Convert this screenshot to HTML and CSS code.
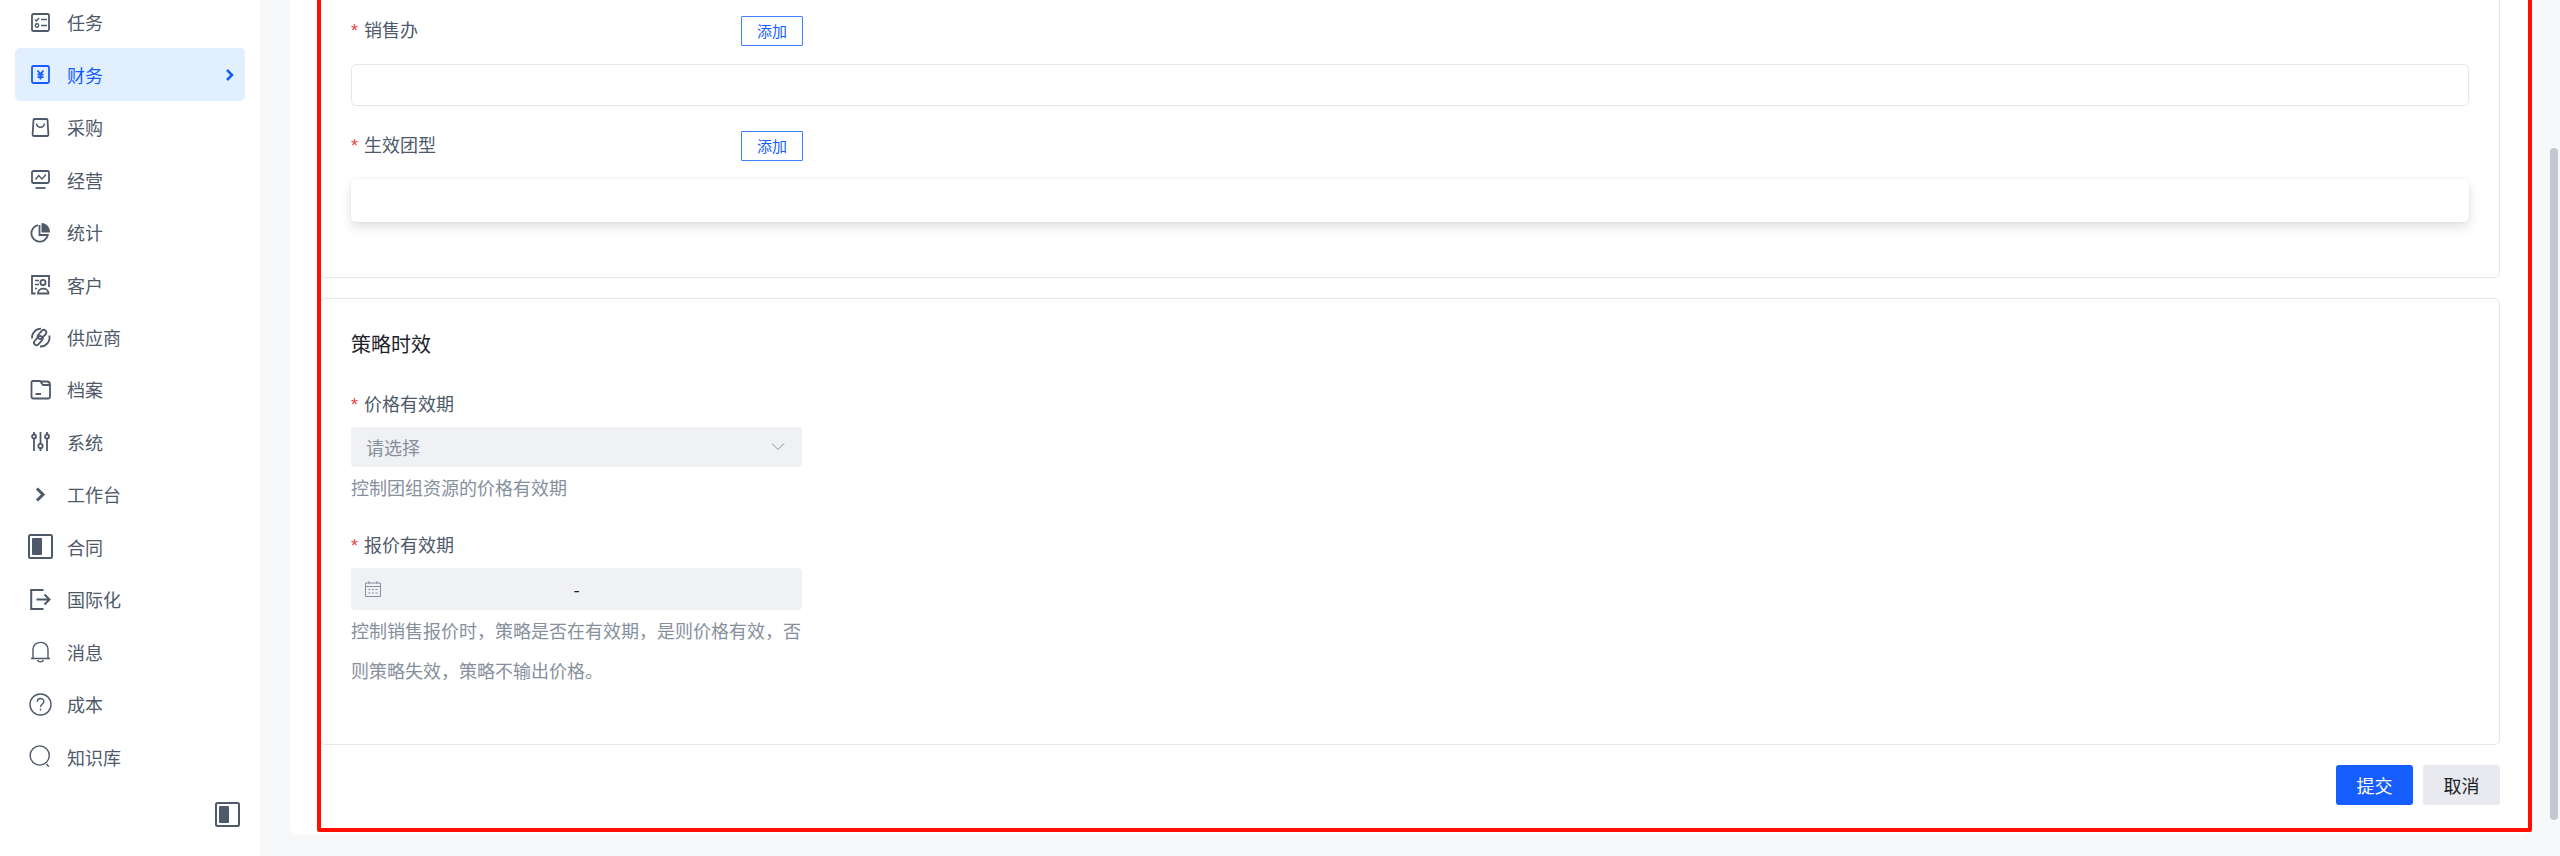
FILE: index.html
```html
<!DOCTYPE html>
<html lang="zh-CN">
<head>
<meta charset="utf-8">
<title>策略时效</title>
<link rel="stylesheet" href="styles.css">
</head>
<body>
<div class="app">
  <aside class="sidebar">
    <nav class="menu" aria-label="主菜单">
      <a class="menu-item" href="#">
        <svg class="icon" viewBox="0 0 25 25"><rect x="4" y="4" width="17" height="17" rx="1.5"/><path class="thin" d="M7 9.500l1.500 1.500 2.500-3M13 9.500h6M13 15.500h6"/><circle class="thin" cx="9" cy="15.500" r="1.700"/></svg>
        <span>任务</span>
      </a>
      <a class="menu-item active" href="#">
        <svg class="icon" viewBox="0 0 25 25"><rect x="4" y="4" width="17" height="17" rx="1.500"/><path d="M9.500 8.500l3 3.500 3-3.500M12.500 12v5.500M9.500 12.700h6M9.500 15.200h6"/></svg>
        <span>财务</span>
        <svg class="arrow" viewBox="0 0 12 12"><path d="M3 1l5 5-5 5"/></svg>
      </a>
      <a class="menu-item" href="#">
        <svg class="icon" viewBox="0 0 25 25"><path d="M6.300 4h12.400q.7 0 .8.800l.9 15q0 1.200-1.200 1.200H5.800q-1.200 0-1.200-1.200l.9-15q.1-.8.800-.8z"/><path class="thin" d="M8.500 8.500c1 5 7 5 8 0"/></svg>
        <span>采购</span>
      </a>
      <a class="menu-item" href="#">
        <svg class="icon" viewBox="0 0 25 25"><rect x="4" y="4" width="17" height="12" rx="1.500"/><path class="thin" d="M7.500 12.500l3.200-4 3.300 3.500 4-4.500"/><path d="M7.500 21h10"/></svg>
        <span>经营</span>
      </a>
      <a class="menu-item" href="#">
        <svg class="icon" viewBox="0 0 25 25"><path d="M10 5.200A8.300 8.300 0 1 0 19.800 15H11.500V5"/><path class="solid" d="M13.500 3v9.500H22C22 7 18.500 3.300 13.500 3z"/></svg>
        <span>统计</span>
      </a>
      <a class="menu-item" href="#">
        <svg class="icon" viewBox="0 0 25 25"><path d="M7.500 21.500H4V4h17v11"/><path class="thin" d="M7 8.500h4M7 12.500h4M7 16.500h2"/><circle cx="15" cy="10.500" r="2.600"/><path d="M10 21.500c0-6.500 10.500-6.500 10.500 0z"/></svg>
        <span>客户</span>
      </a>
      <a class="menu-item" href="#">
        <svg class="icon" viewBox="0 0 25 25"><path d="M4 13.500A9 9 0 0 1 13 3.700M21.300 10.500A9 9 0 0 1 12 21.500"/><g transform="rotate(-48 12.500 12.500)"><rect x="3.500" y="10.500" width="10.500" height="5" rx="2.500"/><rect x="10.500" y="9" width="10.500" height="5" rx="2.500"/></g></svg>
        <span>供应商</span>
      </a>
      <a class="menu-item" href="#">
        <svg class="icon" viewBox="0 0 25 25"><path d="M5 4h7l3 4h7v11.500q0 2-2 2H5.500q-2 0-2-2V5.500Q3.500 4 5 4zM12 4.500h7q3 0 3 3.500M7.500 17h5.500"/></svg>
        <span>档案</span>
      </a>
      <a class="menu-item" href="#">
        <svg class="icon" viewBox="0 0 25 25"><path d="M6 3v2.500M6 9.500V22M12.500 3v12M12.500 19.500V22M19 3v2.500M19 9.500V22"/><circle cx="6" cy="7.500" r="2"/><circle cx="12.500" cy="17" r="2.200"/><circle cx="19" cy="7.500" r="2"/></svg>
        <span>系统</span>
      </a>
      <a class="menu-item" href="#">
        <svg class="icon bold" viewBox="0 0 25 25"><path d="M9 6.500l6 6-6 6"/></svg>
        <span>工作台</span>
      </a>
      <a class="menu-item" href="#">
        <svg class="icon" viewBox="0 0 25 25"><rect class="wide" x="1" y="1" width="23" height="23" rx="1.500"/><rect class="solid" x="4" y="4" width="10" height="17" rx="1"/></svg>
        <span>合同</span>
      </a>
      <a class="menu-item" href="#">
        <svg class="icon" viewBox="0 0 25 25"><path class="wide" d="M15.500 3H3.200v19h12.300M8.500 12.500H21.500M16.500 7.500l5 5-5 5"/></svg>
        <span>国际化</span>
      </a>
      <a class="menu-item" href="#">
        <svg class="icon" viewBox="0 0 25 25"><path class="thin" d="M3 19.500h19M5 19.500V10.500c0-9.500 15-9.500 15 0V19.500M9.500 21c1 2.500 5 2.500 6 0"/></svg>
        <span>消息</span>
      </a>
      <a class="menu-item" href="#">
        <svg class="icon" viewBox="0 0 25 25"><circle class="thin" cx="12.500" cy="12.500" r="10.500"/><path class="thin" d="M9.300 9.700c0-4.200 6.500-4.200 6.500-.2 0 2.800-3.300 2.800-3.300 5.500M12.500 16.500v2"/></svg>
        <span>成本</span>
      </a>
      <a class="menu-item" href="#">
        <svg class="icon" viewBox="0 0 25 25"><circle class="thin" cx="11.700" cy="11.500" r="9.600"/><path class="thin" d="M18.500 20l2.200 2.700"/></svg>
        <span>知识库</span>
      </a>
    </nav>
    <button class="collapse" type="button" aria-label="收起菜单">
      <svg class="icon" viewBox="0 0 25 25"><rect class="wide" x="1" y="1" width="23" height="23" rx="1.500"/><rect class="solid" x="4" y="4" width="10" height="17" rx="1"/></svg>
    </button>
  </aside>

  <main class="content">
    <form class="panel">
      <section class="card card-scope">
        <div class="scope-row">
          <span class="label" id="office">销售办</span>
          <button class="add" type="button" aria-describedby="office">添加</button>
        </div>
        <div class="list" role="group" aria-labelledby="office"></div>
        <div class="scope-row">
          <span class="label" id="group">生效团型</span>
          <button class="add" type="button" aria-describedby="group">添加</button>
        </div>
        <div class="list raised" role="group" aria-labelledby="group"></div>
      </section>

      <section class="card card-validity">
        <h2 class="title">策略时效</h2>
        <div class="field">
          <label class="label" for="price">价格有效期</label>
          <div class="select-wrap">
            <select class="select" id="price" disabled><option>请选择</option></select>
            <svg class="chevron" viewBox="0 0 14 10"><path d="M1 1.500l6 6 6-6"/></svg>
          </div>
          <p class="help">控制团组资源的价格有效期</p>
        </div>
        <div class="field">
          <label class="label" for="start">报价有效期</label>
          <div class="range">
            <svg class="calendar" viewBox="0 0 16 16"><path d="M.5 2h15v13.500H.5zM.5 5.500h15M4 0v3M12 0v3M3.500 8.500h2M7 8.500h2M10.500 8.500h2M3.500 12h2M7 12h2M10.500 12h2"/></svg>
            <input class="date" id="start" type="text" disabled>
            <span>-</span>
            <input class="date" type="text" aria-label="结束日期" disabled>
          </div>
          <p class="help">控制销售报价时，策略是否在有效期，是则价格有效，否则策略失效，策略不输出价格。</p>
        </div>
      </section>

      <div class="actions">
        <button class="btn primary" type="button">提交</button>
        <button class="btn" type="button">取消</button>
      </div>
      <div class="frame"></div>
    </form>
    <div class="scrollbar"></div>
  </main>
</div>
</body>
</html>
```
FILE: styles.css
```css
* { box-sizing: border-box; }

body {
  margin: 0;
  overflow: hidden;
  background: #f7f8fa;
  color: #1d2129;
  font-family: "Noto Sans CJK SC", sans-serif;
  font-size: 18px;
}

button, input, select { font: inherit; }

.app { display: flex; min-height: 100vh; }

/* Sidebar */
.sidebar {
  display: flex;
  flex-direction: column;
  flex: 0 0 260px;
  padding: 0 15px;
  background: #fff;
}
.menu {
  display: grid;
  grid-template-rows: repeat(15, 1fr);
  height: 787px;
  margin-top: -4px;
}
.menu-item {
  display: flex;
  align-items: center;
  gap: 14px;
  padding: 0 9px 0 13px;
  border-radius: 5px;
  color: #4e5969;
  text-decoration: none;
}
.menu-item.active { background: #e2efff; color: #165dff; }
.icon {
  width: 25px;
  height: 25px;
  fill: none;
  stroke: currentColor;
  stroke-width: 1.8;
}
.icon .thin { stroke-width: 1.4; }
.icon .wide { stroke-width: 2; }
.icon .solid { fill: currentColor; stroke: none; }
.icon.bold { stroke-width: 3; }
.arrow {
  width: 12px;
  height: 12px;
  margin-left: auto;
  fill: none;
  stroke: currentColor;
  stroke-width: 2.5;
}
.collapse {
  display: flex;
  align-self: flex-end;
  margin: 19px 5px 0 0;
  padding: 0;
  border: 0;
  background: none;
  color: #4e5969;
}

/* Content */
.content {
  position: relative;
  flex: 1;
  min-width: 0;
  padding: 0 30px 21px;
}
.panel {
  position: relative;
  display: flex;
  flex-direction: column;
  gap: 20px;
  padding: 0 30px 30px;
  border-radius: 0 0 8px 8px;
  background: #fff;
}
.frame {
  position: absolute;
  inset: -4px -2px 3px 27px;
  border: 4px solid #ff0f00;
  border-radius: 2px;
  pointer-events: none;
}
.scrollbar {
  position: absolute;
  top: 148px;
  right: 2px;
  bottom: 36px;
  width: 8px;
  border-radius: 4px;
  background: #c2c7d0;
}
.card {
  padding: 30px 30px 54px;
  border: 1px solid #e5e6eb;
  border-radius: 5px;
}
.card-scope {
  padding: 16px 30px 56px;
  border-top: 0;
  border-radius: 0 0 5px 5px;
}

.label { color: #4e5969; }
.label::before {
  content: "*";
  margin-right: 6px;
  color: #f53f3f;
  font-family: "Liberation Sans", sans-serif;
  line-height: 1;
}

.scope-row {
  display: flex;
  justify-content: space-between;
  max-width: 452px;
  height: 30px;
  margin-bottom: 18px;
  line-height: 26px;
}
.add {
  width: 62px;
  padding: 0;
  border: 1px solid #4080ff;
  border-radius: 1px;
  background: #fff;
  color: #165dff;
  font-size: 15px;
}
.list {
  height: 42px;
  border: 1px solid #e5e6eb;
  border-radius: 5px;
}
.list + .scope-row { margin-top: 25px; }
.list.raised {
  height: 43px;
  border-color: #fff;
  box-shadow: 0 5px 12px rgba(0, 0, 0, 0.12), 0 0 2px rgba(0, 0, 0, 0.1);
}

.card-scope { padding-bottom: 55px; }

.title {
  margin: 0 0 24px;
  font-size: 20px;
  font-weight: 400;
  line-height: 30px;
}
.field { max-width: 451px; }
.field + .field { margin-top: 17px; }
.field .label { display: block; margin-bottom: 4px; line-height: 40px; }
.select-wrap { position: relative; }
.select {
  display: block;
  width: 100%;
  height: 40px;
  padding: 0 15px;
  border: 0;
  border-radius: 3px;
  background: #f0f1f4;
  color: #86909c;
  opacity: 1;
  appearance: none;
}
.chevron {
  position: absolute;
  top: 15px;
  right: 17px;
  width: 14px;
  height: 10px;
  fill: none;
  stroke: #86909c;
}
.range {
  display: flex;
  align-items: center;
  gap: 10px;
  height: 42px;
  padding: 0 40px 0 14px;
  border-radius: 4px;
  background: #f0f1f4;
}
.calendar {
  flex: none;
  width: 16px;
  height: 16px;
  fill: none;
  stroke: #86909c;
}
.date {
  flex: 1;
  width: 0;
  min-width: 0;
  padding: 0;
  border: 0;
  background: none;
}
.help {
  margin: 0;
  color: #86909c;
  line-height: 40px;
}

.actions { display: flex; justify-content: flex-end; gap: 10px; }
.btn {
  width: 77px;
  height: 40px;
  padding: 0;
  border: 0;
  border-radius: 3px;
  background: #e9eaef;
  color: #1d2129;
}
.btn.primary { background: #165dff; color: #fff; }
```
